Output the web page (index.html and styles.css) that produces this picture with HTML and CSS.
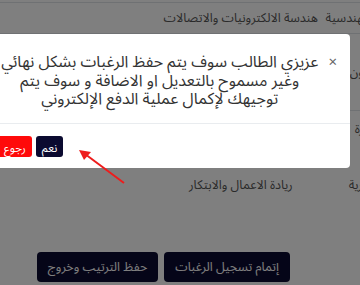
FILE: index.html
```html
<!DOCTYPE html>
<html lang="ar" dir="rtl">
<head>
  <meta charset="UTF-8">
  <meta name="viewport" content="width=device-width, initial-scale=1.0">
  <title>ترتيب الرغبات</title>
  <link rel="stylesheet" href="styles.css">
</head>
<body>
  <div class="page">
    <table class="wishes">
      <tr class="line">
        <td class="college">التقنية الهندسية</td>
        <td class="dept">هندسة الالكترونيات والاتصالات</td>
        <td class="extra"></td>
      </tr>
      <tr class="line tall">
        <td class="college">الفنون</td>
        <td class="dept"></td>
        <td class="extra"></td>
      </tr>
      <tr class="short">
        <td class="college">إدارة</td>
        <td class="dept"></td>
        <td class="extra"></td>
      </tr>
      <tr class="tall">
        <td class="college">الإدارية</td>
        <td class="dept">ريادة الاعمال والابتكار</td>
        <td class="extra"></td>
      </tr>
    </table>

    <div class="actions">
      <button class="btn-dark">إتمام تسجيل الرغبات</button>
      <button class="btn-dark">حفظ الترتيب وخروج</button>
    </div>
  </div>

  <div class="backdrop"></div>

  <div class="modal">
    <div class="modal-header">
      <span class="close">&times;</span>
      <p class="message">
        عزيزي الطالب سوف يتم حفظ الرغبات بشكل نهائي<br>
        وغير مسموح بالتعديل او الاضافة و سوف يتم<br>
        توجيهك لإكمال عملية الدفع الإلكتروني
      </p>
    </div>
    <div class="modal-footer">
      <button class="btn-small btn-yes">نعم</button>
      <button class="btn-small btn-back">رجوع</button>
    </div>
  </div>

  <svg class="arrow" width="52" height="40" viewBox="0 0 52 40">
    <line x1="48" y1="37" x2="9" y2="8" stroke="#ee1c1c" stroke-width="2"/>
    <polygon points="3,4 15,6 8,14" fill="#ee1c1c"/>
  </svg>
</body>
</html>
```

FILE: styles.css
```css
body {
  margin: 0;
  width: 360px;
  height: 285px;
  overflow: hidden;
  background: #fff;
  color: #555;
  font-family: 'Noto Sans Arabic', 'DejaVu Sans', sans-serif;
}

.page {
  direction: rtl;
  padding-top: 2px;
}

.wishes {
  border-collapse: collapse;
  margin-right: -50px;
  font-size: 12.5px;
}

.wishes td {
  padding: 0;
  text-align: center;
  white-space: nowrap;
}

.wishes tr:first-child {
  border-top: 1px solid #dee2e6;
}

.wishes tr.line {
  border-bottom: 1px solid #dee2e6;
}

.wishes tr:first-child td {
  height: 30px;
}

.wishes tr.tall td {
  height: 76px;
}

.wishes tr.short td {
  height: 36px;
}

.college {
  width: 90px;
  max-width: 90px;
}

.dept {
  width: 160px;
}

.extra {
  width: 170px;
}

.actions {
  display: flex;
  gap: 6px;
  margin-top: 29px;
  padding-right: 70px;
}

.btn-dark {
  height: 30px;
  padding: 0 11px;
  border: none;
  border-radius: 4px;
  background: #0b0a30;
  color: #fff;
  font-family: inherit;
  font-size: 12.5px;
}

.backdrop {
  position: fixed;
  inset: 0;
  background: rgba(0, 0, 0, 0.5);
}

.modal {
  position: fixed;
  top: 34px;
  left: -18px;
  width: 368px;
  background: #fff;
  border-radius: 4px;
  direction: rtl;
  color: #333;
}

.modal-header {
  display: flex;
  align-items: flex-start;
  gap: 7px;
  padding: 19px 13px 14px 16px;
}

.close {
  font-size: 15px;
  line-height: 18px;
  color: #666;
}

.message {
  flex: 1;
  margin: 0;
  text-align: center;
  font-size: 16px;
  line-height: 18.5px;
  white-space: nowrap;
}

.modal-footer {
  display: flex;
  justify-content: flex-end;
  gap: 4px;
  padding: 12px 16px 11px;
  border-top: 1px solid #e9ecef;
}

.btn-small {
  height: 21px;
  padding: 0 6px;
  border: none;
  border-radius: 3px;
  color: #fff;
  font-family: inherit;
  font-size: 11.5px;
}

.btn-yes {
  background: #0b0a30;
}

.btn-back {
  background: #ff0a0a;
}

.arrow {
  position: fixed;
  left: 76px;
  top: 146px;
}
```
